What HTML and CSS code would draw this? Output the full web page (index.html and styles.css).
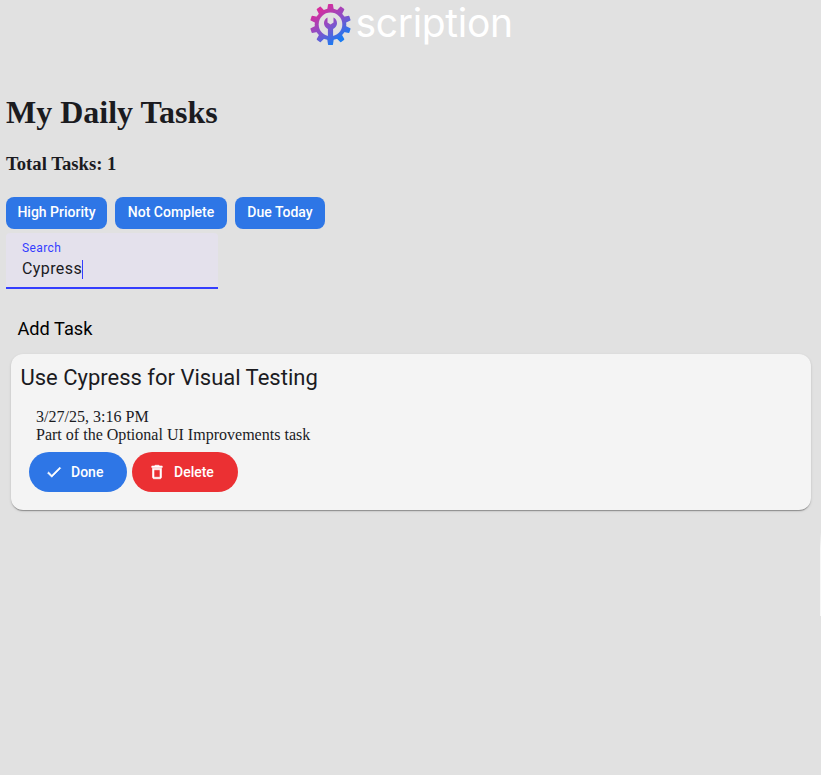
FILE: index.html
```html
<!DOCTYPE html>
<html lang="en">
<head>
<meta charset="utf-8">
<title>My Daily Tasks</title>
<link rel="stylesheet" href="styles.css">
</head>
<body>
<header class="brand">
  <svg class="logo" width="206" height="50" viewBox="0 0 206 50" role="img" aria-label="scription">
    <defs>
      <linearGradient id="g" gradientUnits="userSpaceOnUse" x1="-10" y1="-15" x2="10" y2="15">
        <stop offset="0" stop-color="#d62d9c"/>
        <stop offset="0.5" stop-color="#8a4fc8"/>
        <stop offset="1" stop-color="#197bf2"/>
      </linearGradient>
      <mask id="m" maskUnits="userSpaceOnUse" x="-22" y="-22" width="44" height="44">
        <g fill="#fff">
          <circle r="15.800"/>
          <path id="t" d="M-3.200-15L-2.500-20Q-2.300-20.500-1.700-20.500H1.700Q2.300-20.500 2.500-20L3.200-15V15L2.500 20Q2.300 20.500 1.700 20.500H-1.700Q-2.300 20.500-2.500 20L-3.200 15Z"/>
          <use href="#t" transform="rotate(36)"/>
          <use href="#t" transform="rotate(72)"/>
          <use href="#t" transform="rotate(108)"/>
          <use href="#t" transform="rotate(144)"/>
        </g>
        <circle r="11.800" fill="#000"/>
        <path fill="#fff" d="M-3-7C-5.300-6-6.700-3.400-6.500-.6C-6.300 1.600-4.700 3.300-2.600 4.600V14H2.600V4.600C4.700 3.300 6.300 1.600 6.500-.6C6.700-3.400 5.300-6 3-7V-2L0 .2L-3-2Z"/>
      </mask>
    </defs>
    <g transform="translate(22.500 24.400)"><rect x="-22" y="-22" width="44" height="44" fill="url(#g)" mask="url(#m)"/></g>
    <text class="logo-text" x="47.500" y="36.500" textLength="157.500">scription</text>
  </svg>
</header>
<main>
  <h1>My Daily Tasks</h1>
  <h2>Total Tasks: 1</h2>
  <div class="filters">
    <button class="chip high">High Priority</button>
    <button class="chip open">Not Complete</button>
    <button class="chip due">Due Today</button>
  </div>
  <div class="search">
    <div class="label">Search</div>
    <div class="value">Cypress<span class="caret"></span></div>
  </div>
  <button class="add">Add Task</button>
  <section class="card">
    <div class="title">Use Cypress for Visual Testing</div>
    <div class="details">
      <div>3/27/25, 3:16 PM</div>
      <div>Part of the Optional UI Improvements task</div>
    </div>
    <div class="actions">
      <button class="action done">
        <svg width="18" height="18" viewBox="0 0 24 24"><path d="M9 16.170L4.830 12l-1.420 1.410L9 19 21 7l-1.410-1.410z"/></svg>
        <span>Done</span>
      </button>
      <button class="action delete">
        <svg width="18" height="18" viewBox="0 0 24 24"><path d="M6 19c0 1.100.9 2 2 2h8c1.100 0 2-.9 2-2V7H6v12zM8 9h8v10H8V9zm7.500-5l-1-1h-5l-1 1H5v2h14V4z"/></svg>
        <span>Delete</span>
      </button>
    </div>
  </section>
</main>
<div class="edge"></div>
</body>
</html>
```
FILE: styles.css
```css
* { box-sizing: border-box; }
html { height: 100%; }
body {
  margin: 0;
  height: 100%;
  position: relative;
  overflow: hidden;
  background: #e1e1e1;
  color: #1b1b1f;
  font-family: "Liberation Serif", serif;
}
button {
  border: 0;
  padding: 0;
  color: #fff;
  font: 500 14px/20px Roboto, sans-serif;
  white-space: nowrap;
}
.brand { height: 50px; padding-left: 308px; }
.logo { display: block; overflow: visible; }
.logo-text { font: 39px Inter, sans-serif; font-variant-ligatures: none; fill: #fff; }
main { padding: 0 10px 0 6px; }
h1 { margin: 44px 0 0; font-size: 32px; line-height: 37px; }
h2 { margin: 22px 0 0; font-size: 18.700px; line-height: 21px; }
.filters { display: flex; gap: 8px; margin-top: 23px; }
.chip { height: 32px; border-radius: 8px; background: #2e76e6; padding-bottom: 2px; }
.high { width: 101px; }
.open { width: 112px; }
.due { width: 90px; }
.search {
  width: 212px;
  height: 56px;
  margin-top: 4px;
  padding: 7px 16px 0;
  background: #e4e1ec;
  border-bottom: 2px solid #343dff;
  border-radius: 4px 4px 0 0;
  font-family: Roboto, sans-serif;
}
.label { color: #343dff; font-size: 12px; line-height: 17px; letter-spacing: .4px; }
.value { display: flex; align-items: center; font-size: 16px; line-height: 24px; letter-spacing: .4px; }
.caret { width: 1px; height: 19px; background: #343dff; }
.add {
  display: block;
  margin: 28px 0 0 11.500px;
  background: none;
  color: #000;
  font-size: 18.200px;
  font-weight: 400;
  line-height: 24px;
}
.card {
  height: 156px;
  margin: 13px 0 0 5px;
  padding: 10px;
  border-radius: 12px;
  background: #f4f4f4;
  box-shadow: 0 2px 1px -1px rgba(0,0,0,.2), 0 1px 1px rgba(0,0,0,.14), 0 1px 3px rgba(0,0,0,.12);
}
.title { margin-left: -.6px; font: 22px/28px Roboto, sans-serif; }
.details { margin-top: 16px; padding-left: 15px; font-size: 16.050px; line-height: 18px; }
.actions { display: flex; gap: 5px; margin: 8px 0 0 8px; }
.action { display: flex; align-items: center; height: 40px; border-radius: 20px; padding-left: 16px; }
.action svg { margin-right: 8px; fill: #fff; stroke: #fff; stroke-width: .8; }
.done { width: 98px; background: #2e76e6; }
.delete { width: 106px; background: #eb3033; }
.edge {
  position: absolute;
  right: 0;
  top: 532px;
  width: 1px;
  height: 84px;
  background: linear-gradient(#e1e1e1, #f7f7f7 16px);
}
```
